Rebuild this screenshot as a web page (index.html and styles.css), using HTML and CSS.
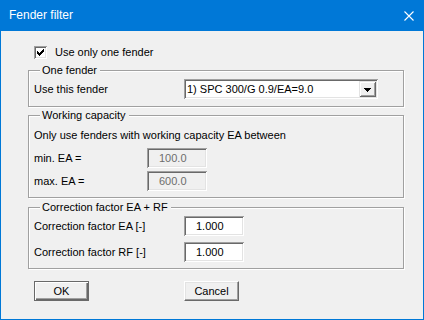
FILE: index.html
```html
<!DOCTYPE html>
<html lang="en">
<head>
<meta charset="UTF-8" />
<title>Fender filter</title>
<link rel="stylesheet" href="styles.css">
</head>
<body>
  <div class="window">
    <div class="titlebar">
      <span class="title">Fender filter</span>
      <svg class="close" width="10" height="10" viewBox="0 0 10 10" aria-label="Close">
        <path d="M0.5 0.5L9.5 9.5M9.5 0.5L0.5 9.5" stroke="#fff" stroke-width="1.1" fill="none"/>
      </svg>
    </div>
    <div class="content">
      <label class="check-row">
        <span class="checkbox">
          <svg width="13" height="13" viewBox="0 0 13 13" shape-rendering="crispEdges">
            <path d="M9 3h1v1h-1zM8 4h2v1h-2zM3 5h1v1h-1zM7 5h3v1h-3zM3 6h2v1h-2zM6 6h3v1h-3zM3 7h5v1h-5zM4 8h3v1h-3zM5 9h1v1h-1z" fill="#000"/>
          </svg>
        </span>
        Use only one fender
      </label>

      <fieldset class="group group-one">
        <legend>One fender</legend>
        <div class="row">
          <span class="label wide">Use this fender</span>
          <div class="combo">
            <span class="combo-text">1) SPC 300/G 0.9/EA=9.0</span>
            <span class="combo-btn">
              <svg width="7" height="4" viewBox="0 0 7 4" shape-rendering="crispEdges">
                <path d="M0 0h7v1h-7zM1 1h5v1h-5zM2 2h3v1h-3zM3 3h1v1h-1z" fill="#000"/>
              </svg>
            </span>
          </div>
        </div>
      </fieldset>

      <fieldset class="group group-capacity">
        <legend>Working capacity</legend>
        <p class="note">Only use fenders with working capacity EA between</p>
        <div class="row first">
          <span class="label narrow">min. EA =</span>
          <span class="field disabled">100.0</span>
        </div>
        <div class="row tight">
          <span class="label narrow">max. EA =</span>
          <span class="field disabled">600.0</span>
        </div>
      </fieldset>

      <fieldset class="group group-factor">
        <legend>Correction factor EA + RF</legend>
        <div class="row">
          <span class="label wide">Correction factor EA [-]</span>
          <span class="field">1.000</span>
        </div>
        <div class="row spaced">
          <span class="label wide">Correction factor RF [-]</span>
          <span class="field">1.000</span>
        </div>
      </fieldset>

      <div class="buttons">
        <button class="btn default">OK</button>
        <button class="btn">Cancel</button>
      </div>
    </div>
  </div>
</body>
</html>
```

FILE: styles.css
```css
:root {
  --blue: #0078d7;
  --face: #f0f0f0;
  --shadow: #a0a0a0;
  --dark: #696969;
  --light: #e3e3e3;
  --font: "Liberation Sans", Arial, sans-serif;
}
* {
  box-sizing: border-box;
}
html, body {
  margin: 0;
  padding: 0;
}
body {
  font-family: var(--font);
  font-size: 11px;
  color: #000;
  background: var(--face);
}
.window {
  width: 424px;
  height: 320px;
  border: 1px solid var(--blue);
  border-top: 0;
  background: var(--face);
  display: flex;
  flex-direction: column;
}
.titlebar {
  height: 31px;
  margin: 0 -1px;
  background: var(--blue);
  color: #fff;
  display: flex;
  align-items: center;
  justify-content: space-between;
  padding: 0 10px 1px 9px;
}
.title {
  font-size: 12px;
}
.close {
  display: block;
  margin-top: 1px;
}
.content {
  padding: 15px 19px 0 27px;
  display: flex;
  flex-direction: column;
}
.check-row {
  display: flex;
  align-items: center;
  height: 13px;
  line-height: 13px;
  margin-left: 6px;
}
.checkbox {
  width: 13px;
  height: 13px;
  margin-right: 8px;
  background: #fff;
  box-shadow:
    inset 1px 1px 0 var(--shadow),
    inset -1px -1px 0 #fff,
    inset 2px 2px 0 var(--dark),
    inset -2px -2px 0 var(--light);
}
.checkbox svg {
  display: block;
}
/* Group boxes */
.group {
  margin: 0;
  min-width: 0;
  border: 1px solid var(--shadow);
  box-shadow: inset 1px 1px 0 #fff, 1px 1px 0 #fff;
  padding: 0 5px 6px 5px;
}
.group legend {
  padding: 0 3px 0 2px;
  margin-left: 6px;
  line-height: 13px;
  background: var(--face);
}
.group-one {
  margin-top: 5px;
  padding-top: 2px;
  padding-bottom: 7px;
}
.group-capacity {
  margin-top: 2px;
  padding-top: 6px;
}
.group-factor {
  margin-top: 3px;
  padding-top: 2px;
}
.note {
  margin: 0;
  line-height: 14px;
}
.row {
  display: flex;
  align-items: center;
}
.row.first {
  margin-top: 6px;
}
.row.tight {
  margin-top: 3px;
}
.row.spaced {
  margin-top: 6px;
}
.label {
  flex: none;
}
.label.wide {
  width: 150px;
}
.label.narrow {
  width: 113px;
}
/* Sunken fields */
.combo,
.field {
  background: #fff;
  box-shadow:
    inset 1px 1px 0 var(--shadow),
    inset -1px -1px 0 #fff,
    inset 2px 2px 0 var(--dark),
    inset -2px -2px 0 var(--light);
}
.combo {
  width: 194px;
  height: 20px;
  display: flex;
  align-items: center;
  justify-content: space-between;
  padding: 2px 2px 2px 3px;
}
.combo-btn {
  width: 17px;
  height: 16px;
  display: flex;
  align-items: center;
  justify-content: center;
  background: var(--face);
  box-shadow:
    inset 1px 1px 0 var(--light),
    inset -1px -1px 0 var(--dark),
    inset 2px 2px 0 #fff,
    inset -2px -2px 0 var(--shadow);
}
.combo-btn svg {
  display: block;
  margin-top: 1px;
}
.field {
  width: 60px;
  height: 20px;
  line-height: 20px;
  padding-left: 12px;
}
.field.disabled {
  background: var(--face);
  color: #6d6d6d;
}
/* Buttons */
.buttons {
  display: flex;
  margin-top: 12px;
  padding-left: 6px;
  gap: 95px;
}
.btn {
  width: 55px;
  height: 20px;
  padding: 0;
  font-family: var(--font);
  font-size: 11px;
  color: #000;
  background: var(--face);
  border: 1px solid;
  border-color: #fff var(--dark) var(--dark) #fff;
  box-shadow: inset -1px -1px 0 var(--shadow), inset 1px 1px 0 var(--light);
}
.btn.default {
  border-color: var(--dark);
  box-shadow:
    inset 1px 1px 0 #fff,
    inset -1px -1px 0 var(--dark),
    inset -2px -2px 0 var(--shadow);
}
```
